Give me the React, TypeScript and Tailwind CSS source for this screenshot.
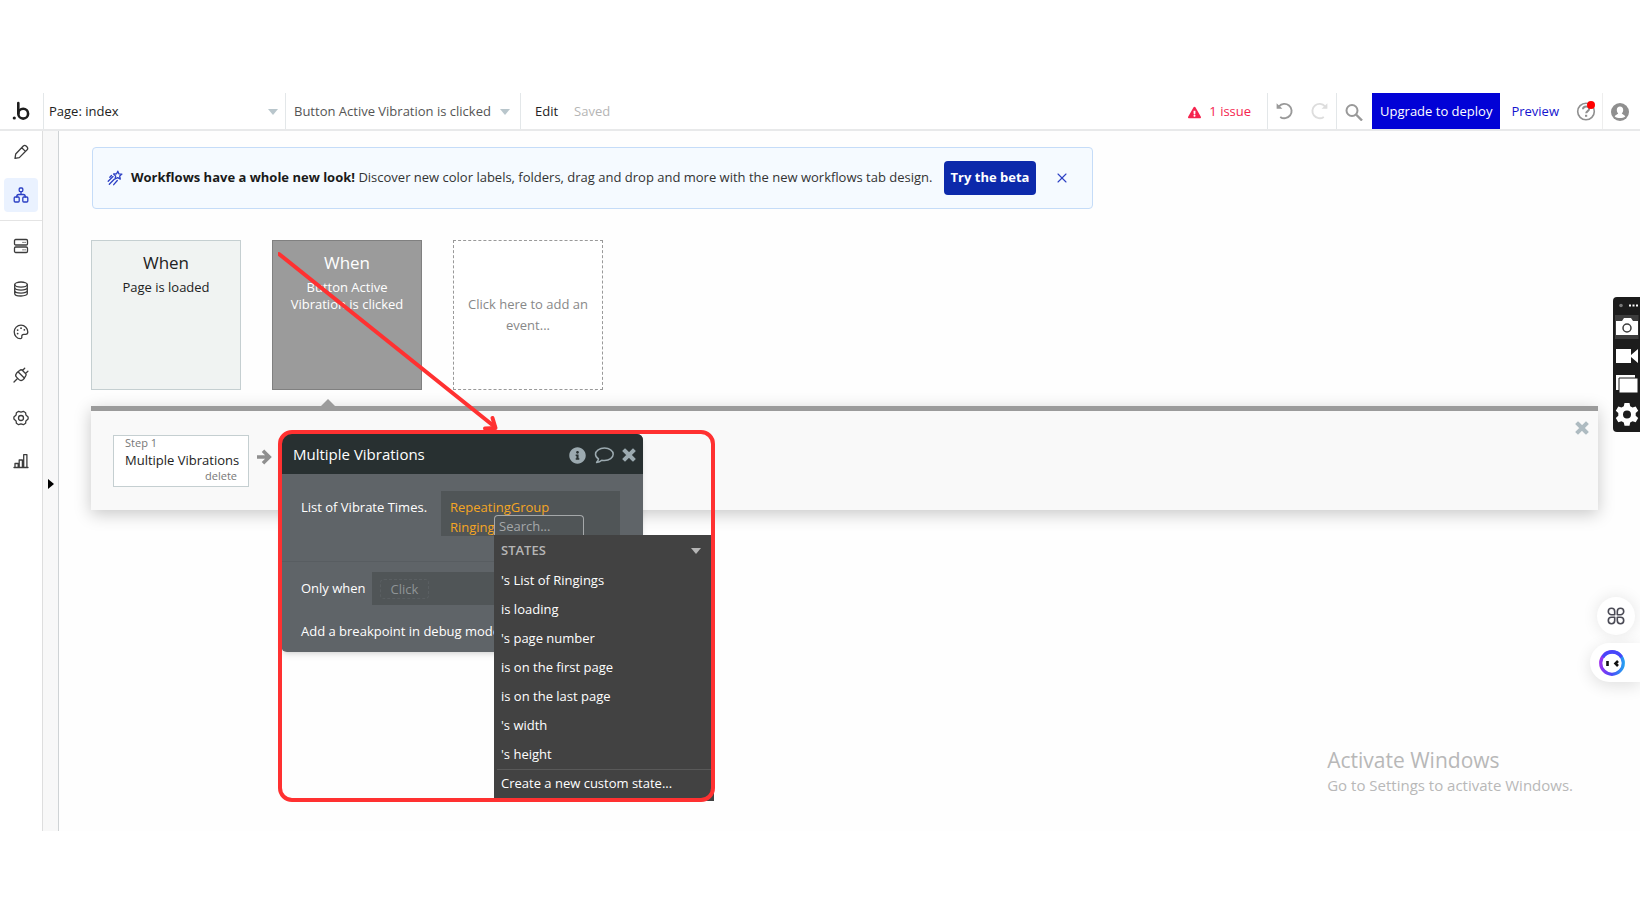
import type { ReactNode } from "react";
import { FaExclamationTriangle, FaInfoCircle } from "react-icons/fa";
import { X } from "lucide-react";

const STATES = [
  "'s List of Ringings",
  "is loading",
  "'s page number",
  "is on the first page",
  "is on the last page",
  "'s width",
  "'s height",
];

function Icon({ children }: { children: ReactNode }) {
  return (
    <svg
      width="16"
      height="16"
      viewBox="0 0 16 16"
      fill="none"
      stroke="currentColor"
      strokeWidth="1.3"
      strokeLinecap="round"
      strokeLinejoin="round"
      aria-hidden="true"
    >
      {children}
    </svg>
  );
}

function Caret({ className }: { className: string }) {
  return (
    <svg width="10" height="6" viewBox="0 0 10 6" className={className} aria-hidden="true">
      <path d="M0 0h10L5 6z" fill="currentColor" />
    </svg>
  );
}

function Cross() {
  return (
    <svg width="14" height="14" viewBox="0 0 14 14" aria-hidden="true">
      <path d="M3 3l8 8M11 3l-8 8" stroke="currentColor" strokeWidth="4" strokeLinecap="square" />
    </svg>
  );
}

const NAV = [
  {
    label: "Data",
    icon: (
      <Icon>
        <rect x="1.5" y="1.5" width="13" height="5.5" rx="1.2" />
        <rect x="1.5" y="9" width="13" height="5.5" rx="1.2" />
        <path d="M10 4.3h.1M12 4.3h.1M10 11.8h.1M12 11.8h.1" />
      </Icon>
    ),
  },
  {
    label: "Database",
    icon: (
      <Icon>
        <ellipse cx="8" cy="3.6" rx="6.3" ry="2.6" />
        <path d="M1.7 3.6v8.8c0 1.5 2.8 2.6 6.3 2.6s6.3-1.1 6.3-2.6V3.6M1.7 6.6c0 1.5 2.8 2.6 6.3 2.6s6.3-1.1 6.3-2.6M1.7 9.6c0 1.5 2.8 2.6 6.3 2.6s6.3-1.1 6.3-2.6" />
      </Icon>
    ),
  },
  {
    label: "Styles",
    icon: (
      <Icon>
        <path d="M8 1.2C4.2 1.2 1.2 4.2 1.2 7.8C1.2 11.5 4 14.7 7.2 14.7C8.7 14.7 9 13.6 8.8 12.6C8.6 11.2 9.4 10.4 10.7 10.4H12.6C14 10.4 14.8 9.5 14.8 8C14.8 4.2 11.8 1.2 8 1.2Z" />
        <path d="M4.6 6.1h.1M8 4.2h.1M11.3 5.8h.1M4.6 9.6h.1" strokeWidth="1.7" />
      </Icon>
    ),
  },
  {
    label: "Plugins",
    icon: (
      <Icon>
        <path d="M5 4.8L11.5 11.2L9.9 12.7C8.7 13.7 7 13.6 6 12.6L3.5 10.1C2.5 9.1 2.5 7.5 3.5 6.3ZM5 4.8L6.7 3.4C7.5 2.7 8.7 2.7 9.5 3.5L12.5 6.5C13.3 7.3 13.3 8.5 12.5 9.3L11.2 11M4 12L1 15M9.5 3.5L11.7 1.2M12.5 6.5L14.9 4.2" />
      </Icon>
    ),
  },
  {
    label: "Settings",
    icon: (
      <Icon>
        <circle cx="8" cy="8" r="2.5" />
        <path d="M5.6 1.3L8 2.2L10.4 1.3L12.6 2.7L12.9 5L15.1 6.9V9.1L12.9 11L12.6 13.3L10.4 14.7L8 13.8L5.6 14.7L3.4 13.3L3.1 11L.9 9.1V6.9L3.1 5L3.4 2.7Z" />
      </Icon>
    ),
  },
  {
    label: "Logs",
    icon: (
      <Icon>
        <path d="M1 14.5h14M2 14.5v-4h3.2v4M6.2 14.5v-7.5h3.2v7.5M10.7 14.5V1.7h3.2v12.8" />
      </Icon>
    ),
  },
];

function Header() {
  return (
    <header className="flex h-[38px] items-stretch border-b-2 border-[#e8e9ea] bg-white text-[13px]">
      <a href="#" aria-label="Home" className="flex w-[43px] shrink-0 items-center justify-center pr-0.5 text-[#1d1d1d]">
        <svg width="18" height="20" viewBox="0 0 18 20" fill="none" aria-hidden="true">
          <circle cx="2.3" cy="17" r="1.6" fill="currentColor" />
          <path d="M6.3 2v10.2" stroke="currentColor" strokeWidth="2.6" strokeLinecap="round" />
          <circle cx="11.2" cy="12.7" r="4.9" stroke="currentColor" strokeWidth="2.6" />
        </svg>
      </a>
      <button className="flex w-[243px] items-center justify-between border-x border-[#e3e7e9] pl-[5px] pr-[7px] pt-0.5 text-[#222]">
        Page: index
        <Caret className="text-[#b9c6cc]" />
      </button>
      <button className="flex w-[235px] items-center justify-between border-r border-[#e3e7e9] pl-2 pr-2.5 pt-0.5 text-[#555]">
        Button Active Vibration is clicked
        <Caret className="text-[#b9c6cc]" />
      </button>
      <button className="pl-3.5 pt-0.5 text-[#222]">Edit</button>
      <span className="flex items-center pl-4 pt-0.5 text-[#b5b5b5]">Saved</span>

      <div className="ml-auto flex items-stretch">
        <button className="flex items-center gap-2 pr-4 pt-0.5 text-[#f5254f]">
          <FaExclamationTriangle size={13} />
          1 issue
        </button>
        <div className="flex items-center gap-4 border-l border-[#e3e7e9] px-2">
          <button aria-label="Undo" className="text-[#999]">
            <svg width="18" height="18" viewBox="0 0 18 18" fill="none" aria-hidden="true">
              <path d="M3 4.3A7.2 7.2 0 1 1 4.2 14.9" stroke="currentColor" strokeWidth="1.9" />
              <path d="M.6 1.2v5.6h5.8z" fill="currentColor" />
            </svg>
          </button>
          <button aria-label="Redo" className="text-[#ddd]">
            <svg width="18" height="18" viewBox="0 0 18 18" fill="none" aria-hidden="true">
              <path d="M15 4.3A7.2 7.2 0 1 0 13.8 14.9" stroke="currentColor" strokeWidth="1.9" />
              <path d="M17.4 1.2v5.6h-5.8z" fill="currentColor" />
            </svg>
          </button>
        </div>
        <button aria-label="Search" className="flex w-9 items-center justify-center border-l border-[#e3e7e9] pr-0.5 pt-0.5 text-[#999]">
          <svg width="18" height="18" viewBox="0 0 18 18" fill="none" stroke="currentColor" aria-hidden="true">
            <circle cx="7" cy="7.5" r="5.5" strokeWidth="2" />
            <path d="M11 11.5l6 6" strokeWidth="2.4" />
          </svg>
        </button>
        <button className="bg-[#0202d6] px-2 pt-0.5 text-white">Upgrade to deploy</button>
        <a href="#" className="flex items-center px-[11px] pt-0.5 text-[#1414cf]">
          Preview
        </a>
        <button aria-label="Help" className="flex items-center px-1.5 text-[#8f8f8f]">
          <svg width="20" height="20" viewBox="0 0 20 20" fill="none" stroke="currentColor" aria-hidden="true">
            <circle cx="10" cy="10.5" r="8.3" strokeWidth="1.6" />
            <path d="M7 8.2c.1-3.7 6.2-3.6 6.1-.2 0 2-2.9 2.2-2.9 4.3" strokeWidth="2" />
            <path d="M10.1 13.8v2" strokeWidth="2.2" />
            <circle cx="15" cy="4" r="4" fill="#ff0000" stroke="none" />
          </svg>
        </button>
        <button aria-label="Account" className="flex w-[38px] items-center justify-center border-l border-[#eee] pr-1 pt-0.5 text-[#8f8f8f]">
          <svg width="18" height="18" viewBox="0 0 18 18" aria-hidden="true">
            <circle cx="9" cy="9" r="9" fill="currentColor" />
            <path d="M9 3.5c2 0 3.2 1.5 3.2 3.4 0 1.5-.6 2.7-1.4 3.5.2 1 3 1 3.5 3.2-2.8 2-7.8 2-10.6 0 .5-2.2 3.3-2.2 3.5-3.2-.8-.8-1.4-2-1.4-3.5C5.8 5 7 3.5 9 3.5z" fill="#fff" />
          </svg>
        </button>
      </div>
    </header>
  );
}

function Sidebar() {
  return (
    <nav className="w-[43px] shrink-0 border-r border-[#dedede] bg-white text-[#3c3c3c]">
      <div className="flex flex-col items-center gap-[9px] border-b border-[#e4e4e4] pb-2 pt-1">
        <button aria-label="Design" className="flex h-[34px] w-[34px] items-center justify-center">
          <Icon>
            <path d="M2 14.3l.7-4.3 7.6-8c.9-.8 2-.8 2.8 0l1 1c.8.9.8 1.9 0 2.8L6.3 13.6zM8.7 3.7l3.8 3.7" />
          </Icon>
        </button>
        <button aria-label="Workflow" className="flex h-[34px] w-[34px] items-center justify-center rounded bg-[#eaf2ff] text-[#2b3fc4]">
          <Icon>
            <rect x="6.2" y="1" width="3.6" height="3.6" rx="1" />
            <rect x="1.2" y="10" width="5" height="5" rx="1" />
            <rect x="9.8" y="10" width="5" height="5" rx="1" />
            <path d="M8 4.6v2.9M3.7 10c0-1.7.7-2.5 2-2.5h4.6c1.3 0 2 .8 2 2.5" />
          </Icon>
        </button>
      </div>
      <div className="flex flex-col items-center gap-[9px] pt-2">
        {NAV.map((item) => (
          <button key={item.label} aria-label={item.label} className="flex h-[34px] w-[34px] items-center justify-center">
            {item.icon}
          </button>
        ))}
      </div>
    </nav>
  );
}

function Banner() {
  return (
    <div className="flex h-[62px] w-[1001px] max-w-full items-center rounded border border-[#c5dcf8] bg-[#f5faff] pl-3.5 text-[#333]">
      <span className="text-[#2b3fc4]">
        <Icon>
          <path d="M10.8 1.2l1.2 2.7 2.9.2-2.2 2 .6 3-2.6-1.5-2.7 1.4.7-2.9L6.6 4l3-.2zM6 6.5l-4.8 4.7M7 9.5l-4.7 4.8M10.3 10.5l-3.6 4.2M4.5 5.5L2.8 7.3" />
        </Icon>
      </span>
      <p className="ml-2 whitespace-nowrap text-[13px]">
        <strong className="font-bold text-[#1a1a1a]">Workflows have a whole new look!</strong> Discover new color labels,
        folders, drag and drop and more with the new workflows tab design.
      </p>
      <button className="ml-auto h-[34px] w-[92px] rounded bg-[#0c29ab] text-[13px] font-bold text-white">
        Try the beta
      </button>
      <button aria-label="Dismiss" className="ml-[18px] mr-[22px] text-[#2b3fc4]">
        <X size={16} strokeWidth={1.6} />
      </button>
    </div>
  );
}

function Events() {
  return (
    <div className="-ml-px mt-[31px] flex gap-[31px] text-center text-[13px]">
      <button className="flex h-[150px] w-[150px] flex-col items-center border border-[#c5cfd1] bg-[#f0f3f2] pt-2.5 text-[#222]">
        <span className="text-[17px] leading-6">When</span>
        <span className="mt-1 leading-[17px]">Page is loaded</span>
      </button>
      <button className="flex h-[150px] w-[150px] flex-col items-center border border-[#808080] bg-[#9b9b9b] px-2 pt-2.5 text-white">
        <span className="text-[17px] leading-6">When</span>
        <span className="mt-1 leading-[17px]">Button Active Vibration is clicked</span>
      </button>
      <button className="h-[150px] w-[150px] border border-dashed border-[#999] bg-white px-3 leading-[21px] text-[#888]">
        Click here to add an event...
      </button>
    </div>
  );
}

function StateMenu() {
  return (
    <div className="absolute left-[213px] top-[81px] w-[220px]">
      <input
        type="text"
        aria-label="Search"
        placeholder="Search..."
        className="block h-5 w-[90px] rounded-t border border-b-0 border-[#a5a8aa] bg-[#505557] px-1 text-[13px] text-white outline-none placeholder:text-[#a5a8aa]"
      />
      <div className="h-[266px] bg-[#424242] px-[3px] text-[13px] text-white">
        <div className="flex h-[31px] items-center justify-between pl-1 pr-2.5 font-semibold text-[#b5b5b5]">
          STATES
          <Caret className="text-[#b5b5b5]" />
        </div>
        <ul>
          {STATES.map((s) => (
            <li key={s}>
              <button className="block h-[29px] w-full pl-1 text-left">{s}</button>
            </li>
          ))}
        </ul>
        <button className="h-[29px] w-full border-t border-[#595959] pl-1 text-left">Create a new custom state...</button>
      </div>
    </div>
  );
}

function ActionEditor() {
  return (
    <div className="absolute left-[190px] top-[23px] z-20 w-[362px] rounded-md bg-[#5f6468] text-[13px] text-white shadow-md">
      <div className="flex h-10 items-center rounded-t-md bg-[#283031] pl-3 pr-[7px]">
        <h2 className="text-[15px]">Multiple Vibrations</h2>
        <div className="ml-auto flex items-center gap-2 pt-0.5 text-[#9caab0]">
          <button aria-label="Info">
            <FaInfoCircle size={17} />
          </button>
          <button aria-label="Comment">
            <svg width="20" height="18" viewBox="0 0 20 18" fill="none" aria-hidden="true">
              <path
                d="M10.5 2C5.6 2 1.5 4.7 1.5 8.2C1.5 10.2 2.7 11.8 4.5 12.9C4.3 14.4 3.5 15.5 2.6 16.4C4.7 16.2 6.5 15.4 7.8 14.2C8.7 14.4 9.6 14.4 10.5 14.4C15.4 14.4 19.2 11.7 19.2 8.2C19.2 4.7 15.4 2 10.5 2Z"
                stroke="currentColor"
                strokeWidth="1.5"
                strokeLinejoin="round"
              />
            </svg>
          </button>
          <button aria-label="Close">
            <Cross />
          </button>
        </div>
      </div>
      <div className="flex items-start border-b border-[#585d61] px-5 pb-[25px] pt-[17px]">
        <span className="pt-1.5 leading-5">List of Vibrate Times.</span>
        <div className="ml-auto mr-[3px] h-[45px] w-[179px] bg-[#505557] px-[9px] pt-1.5 leading-5 text-[#f5a623]">
          RepeatingGroup
          <br />
          Ringing
        </div>
      </div>
      <div className="flex items-center pl-5 pt-2.5">
        <span>Only when</span>
        <div className="ml-1.5 flex h-[33px] w-[179px] items-center bg-[#505557] pl-2">
          <span className="rounded border border-dashed border-[#5a5f62] px-2.5 leading-[18px] text-[#8f9496]">Click</span>
        </div>
      </div>
      <p className="pb-[11px] pl-5 pt-4 leading-5">Add a breakpoint in debug mode</p>
      <StateMenu />
    </div>
  );
}

function Actions() {
  return (
    <section className="relative -ml-px mr-[42px] mt-4 h-[104px] border-t-[5px] border-[#9b9b9b] bg-[#f9f9f9] shadow-[0_4px_16px_rgba(0,0,0,0.22)]">
      <svg width="14" height="7" viewBox="0 0 14 7" className="absolute -top-3 left-[230px]" aria-hidden="true">
        <path d="M7 0l7 7H0z" fill="#9b9b9b" />
      </svg>
      <div className="flex items-center pl-[22px] pt-6">
        <div className="w-[136px] border border-[#c5cfd1] bg-white px-[11px] pb-1 text-[#777]">
          <div className="text-[11px] leading-[14px]">Step 1</div>
          <div className="whitespace-nowrap text-[13px] leading-5 text-[#222]">Multiple Vibrations</div>
          <button className="block w-full text-right text-[11px] leading-3">delete</button>
        </div>
        <svg width="15" height="16" viewBox="0 0 15 16" fill="none" stroke="#8f8f8f" strokeWidth="3.5" className="mb-2 ml-2" aria-hidden="true">
          <path d="M0 8h12M6 1.7L12.3 8L6 14.3" />
        </svg>
      </div>
      <button aria-label="Close actions" className="absolute right-[9px] top-2.5 flex text-[#aebbc1]">
        <Cross />
      </button>
      <ActionEditor />
    </section>
  );
}

// red frame and arrow drawn over the editor
function Annotation() {
  return (
    <svg width="440" height="556" viewBox="0 0 440 556" fill="none" className="pointer-events-none absolute left-[278px] top-[249px] z-30" aria-hidden="true">
      <rect x="2" y="183" width="433" height="368" rx="12" stroke="#ff3131" strokeWidth="4" />
      <path d="M1 5L217 178" stroke="#ff3131" strokeWidth="4" strokeLinecap="round" />
      <path d="M207 179.5L217.5 179L214.5 169" stroke="#ff3131" strokeWidth="4" strokeLinecap="round" strokeLinejoin="round" />
    </svg>
  );
}

function CaptureBar() {
  return (
    <div className="absolute right-0 top-[297px] z-30 overflow-hidden rounded-l bg-[#1c1c1c]">
      <svg width="27" height="135" viewBox="0 0 27 135" fill="#fff" aria-hidden="true">
        <circle cx="8" cy="8.5" r="1.8" fill="#777" />
        <path d="M16 7.5h2v2h-2zM19.5 7.5h2v2h-2zM23 7.5h2v2h-2z" />
        <path d="M2 18h23.5v24H2z" fill="#3d3d3d" />
        <path d="M3 24h6l2-3h7l2 3h5v14H3z" />
        <circle cx="14" cy="31" r="4" stroke="#3d3d3d" strokeWidth="1.5" />
        <path d="M3 52h15v14H3zM18 58l7-6v14l-7-6z" />
        <path d="M3 78h19v15H3z" />
        <path d="M6 81h19v15H6z" stroke="#1c1c1c" strokeWidth="1" />
        <path
          fillRule="evenodd"
          d="M11.5 106h5l.7 3.3 2.3 1.3 3.2-1.1 2.500 4.300-2.500 2.200v2.800l2.500 2.200-2.500 4.300-3.200-1.100-2.300 1.300-.7 3.300h-5l-.7-3.300-2.300-1.300-3.200 1.100-2.500-4.300 2.500-2.200V116l-2.500-2.200 2.500-4.300 3.200 1.100 2.300-1.300zM14 113.500a4 4 0 1 0 0 8 4 4 0 0 0 0-8z"
        />
      </svg>
    </div>
  );
}

function Widgets() {
  return (
    <>
      <button aria-label="Apps" className="absolute right-[5px] top-[597px] flex h-[38px] w-[38px] items-center justify-center rounded-full bg-white text-[#4a4a55] shadow-[0_0_16px_rgba(0,0,0,0.1)]">
        <svg width="18" height="18" viewBox="0 0 18 18" fill="none" stroke="currentColor" strokeWidth="1.6" strokeLinejoin="round" aria-hidden="true">
          <path d="M7.7 7.7H4.5A3.2 3.2 0 1 1 7.7 4.5zM10.3 7.7h3.2A3.2 3.2 0 1 0 10.3 4.5zM7.7 10.3H4.5A3.2 3.2 0 1 0 7.7 13.5zM10.3 10.3h3.2A3.2 3.2 0 1 1 10.3 13.5z" />
        </svg>
      </button>
      <button aria-label="Assistant" className="absolute right-0 top-[643px] flex h-[39px] w-[50px] items-center rounded-l-full bg-white pl-[9px] shadow-[0_4px_16px_rgba(0,0,0,0.12)]">
        <svg width="26" height="26" viewBox="0 0 26 26" fill="none" aria-hidden="true">
          <defs>
            <linearGradient id="ring" x1="0" y1="16" x2="26" y2="18" gradientUnits="userSpaceOnUse">
              <stop stopColor="#a032f0" />
              <stop offset="0.5" stopColor="#4a48f8" />
              <stop offset="1" stopColor="#22a8f0" />
            </linearGradient>
          </defs>
          <circle cx="13" cy="13" r="11.3" stroke="url(#ring)" strokeWidth="3.2" />
          <path d="M4 7a11.3 11.3 0 0 1 18.5 0" stroke="#4846fa" strokeWidth="3.2" />
          <path d="M8.5 11v5M19 11l-2.5 2.5L19 16" stroke="#111" strokeWidth="2.6" />
        </svg>
      </button>
    </>
  );
}

export default function App() {
  return (
    <div className="relative min-h-screen overflow-x-hidden bg-white py-[93px] font-['Open_Sans','Noto_Sans',sans-serif]">
      <Header />
      <div className="flex min-h-[700px] bg-[#fefefe]">
        <Sidebar />
        <div className="flex w-4 shrink-0 items-start border-r border-[#cfd3d5] bg-[#f8f8f8]">
          <button aria-label="Expand" className="ml-[5px] mt-[348px]">
            <svg width="6" height="10" viewBox="0 0 6 10" aria-hidden="true">
              <path d="M0 0l6 5-6 5z" fill="#000" />
            </svg>
          </button>
        </div>
        <main className="min-w-0 flex-1 pl-[33px] pt-4">
          <Banner />
          <Events />
          <Actions />
        </main>
      </div>
      <CaptureBar />
      <Widgets />
      <div className="absolute right-[67px] top-[746px] text-[#b8b8b8]">
        <p className="text-[21px] leading-7">Activate Windows</p>
        <p className="text-[15px] leading-[22px]">Go to Settings to activate Windows.</p>
      </div>
      <Annotation />
    </div>
  );
}
